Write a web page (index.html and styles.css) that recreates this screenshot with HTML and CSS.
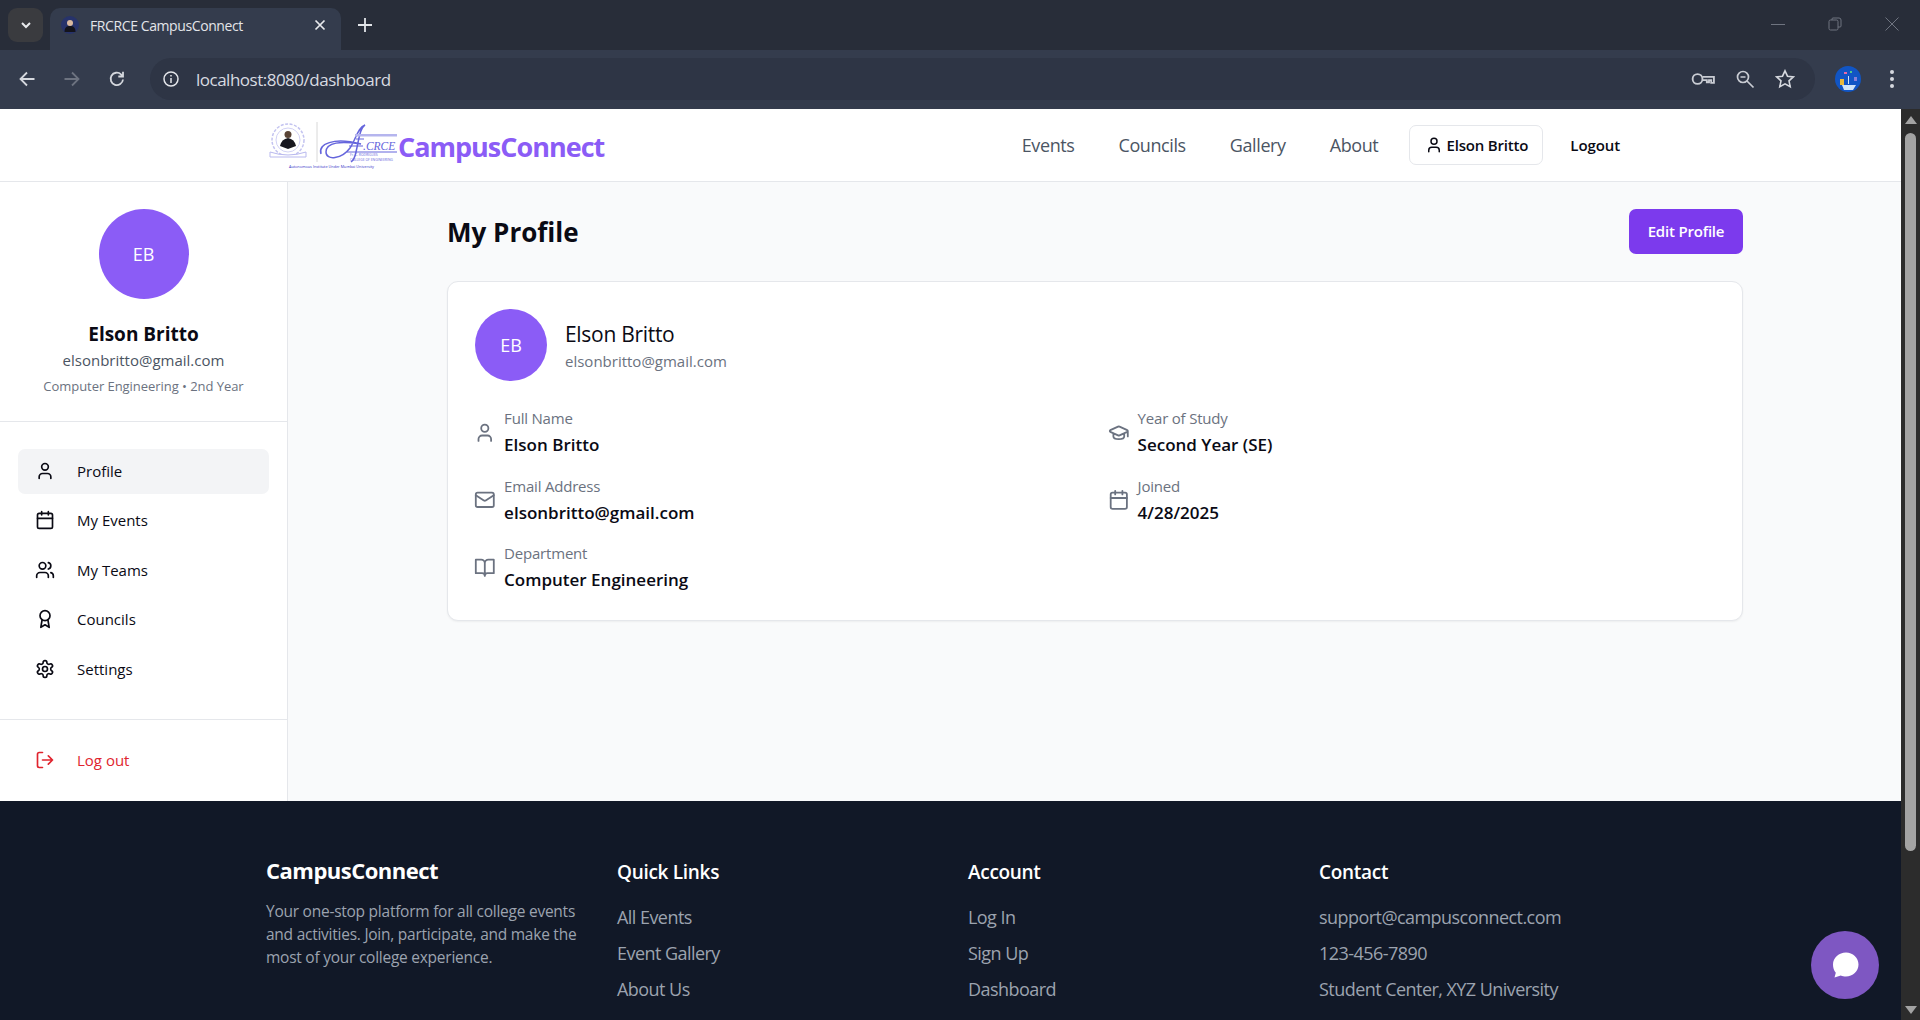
FILE: index.html
```html
<!DOCTYPE html>
<html lang="en">
<head>
    <meta charset="UTF-8">
    <meta name="viewport" content="width=device-width, initial-scale=1.0">
    <title>FRCRCE CampusConnect</title>
    <link rel="stylesheet" href="styles.css">
</head>
<body>
    <div class="tabstrip">
        <div class="tab-search">
            <svg width="16" height="16" viewBox="0 0 16 16" fill="none" stroke="#e8eaed" stroke-width="2"><path d="M4 6l4 4 4-4"/></svg>
        </div>
        <div class="tab">
            <svg class="favicon" width="18" height="18" viewBox="0 0 18 18"><circle cx="9" cy="9" r="9" fill="#27336b"/><circle cx="9" cy="7" r="3" fill="#d9b9a0"/><path d="M3.5 16c0-5 2.500-6 5.500-6s5.500 1 5.500 6z" fill="#14141c"/></svg>
            <span class="tab-title">FRCRCE CampusConnect</span>
            <svg width="12" height="12" viewBox="0 0 12 12" stroke="#e8eaed" stroke-width="1.700"><path d="M1.500 1.500l9 9M10.500 1.500l-9 9"/></svg>
        </div>
        <svg class="new-tab" width="14" height="14" viewBox="0 0 14 14" stroke="#e3e5e9" stroke-width="1.800"><path d="M7 0v14M0 7h14"/></svg>
        <div class="window-controls">
            <svg width="14" height="14" viewBox="0 0 14 14" stroke="#6f7480" fill="none"><path d="M0 7.500h14"/></svg>
            <svg width="14" height="14" viewBox="0 0 14 14" stroke="#6f7480" fill="none"><rect x="1" y="3" width="9" height="10" rx="1.500"/><path d="M4 3V2q0-1 1-1h6q2 0 2 2v6q0 1-1 1h-2"/></svg>
            <svg width="14" height="14" viewBox="0 0 14 14" stroke="#6f7480" fill="none"><path d="M.5.500l13 13M13.500.500l-13 13"/></svg>
        </div>
    </div>
    <div class="toolbar">
        <div class="toolbar-nav">
            <svg width="18" height="18" viewBox="0 0 18 18" fill="none" stroke="#d5d8de" stroke-width="1.800"><path d="M16.500 9h-14M9 2.500L2.500 9 9 15.500"/></svg>
            <svg width="18" height="18" viewBox="0 0 18 18" fill="none" stroke="#6d7380" stroke-width="1.800"><path d="M1.500 9h14M9 2.500L15.500 9 9 15.500"/></svg>
            <svg width="18" height="18" viewBox="0 0 18 18" fill="none" stroke="#d5d8de" stroke-width="1.800"><path d="M15 9.500A6.200 6.200 0 1 1 13 4.300L15 6.300M15 1.800v4.700h-4.700"/></svg>
        </div>
        <div class="omnibox">
            <svg width="18" height="18" viewBox="0 0 18 18" fill="none" stroke="#e3e5e9" stroke-width="1.500"><circle cx="9" cy="9" r="7"/><path d="M9 8v5M9 5v1.500"/></svg>
            <span class="url">localhost:8080/dashboard</span>
            <div class="omnibox-icons">
                <svg width="24" height="18" viewBox="0 0 22 16" fill="none" stroke="#c9ccd3" stroke-width="1.700"><circle cx="6" cy="8" r="4.500"/><path d="M10.500 6h10.500v5.500h-2.500V9h-2v2h-2V9h-4"/></svg>
                <svg width="20" height="20" viewBox="0 0 20 20" fill="none" stroke="#c9ccd3" stroke-width="1.700"><circle cx="8" cy="8" r="5.500"/><path d="M12 12l6.500 6.500M5.500 8h5"/></svg>
                <svg width="20" height="20" viewBox="0 0 20 20" fill="none" stroke="#d5d8de" stroke-width="1.600"><path d="M10 1.800l2.500 5.400 5.800.700-4.300 4 1.200 5.800L10 14.800l-5.200 2.900L6 11.900l-4.300-4 5.800-.700z"/></svg>
            </div>
        </div>
        <svg class="chrome-avatar" width="26" height="30" viewBox="0 0 26 26" preserveAspectRatio="xMidYMid meet"><circle cx="13" cy="13" r="13" fill="#1155c4"/><rect x="5" y="13" width="4" height="6" fill="#e9b93a"/><rect x="9" y="6" width="3" height="2" fill="#e86aa6"/><rect x="15" y="5" width="2" height="2" fill="#52c98a"/><rect x="19" y="11" width="3" height="4" fill="#8a7fd8"/><path d="M13 10h1v8h-1zM7 19h14l-3 5H9z" fill="#cfe4f8"/></svg>
        <svg class="chrome-menu" width="4" height="18" viewBox="0 0 4 18" fill="#d5d8de"><circle cx="2" cy="2" r="2"/><circle cx="2" cy="9" r="2"/><circle cx="2" cy="16" r="2"/></svg>
    </div>

    <div class="viewport">
        <div class="page">
            <header class="site-header">
                <div class="brand">
                    <svg class="brand-logo" width="132" height="52" viewBox="0 0 132 52">
                        <circle cx="22" cy="21" r="16" fill="#fff" stroke="#c3c3f0" stroke-width="1.500" stroke-dasharray="3 1.500"/>
                        <circle cx="22" cy="21" r="12" fill="none" stroke="#d2d2f5"/>
                        <circle cx="22" cy="15.500" r="3.500" fill="#5a4436"/>
                        <path d="M14 27q1.500-7 8-8 6.500 1 8 8l-8 3z" fill="#17171f"/>
                        <path d="M4 33q18 6 36 0v5H4z" fill="#fff" stroke="#b9b9ee"/>
                        <path d="M51 3v40" stroke="#d8d8d8"/>
                        <path d="M55 35c-3-10 12-17 40-10-20-3-35-2-35 8 0 9 16 7 24-4 6-9 8-21 15-23-5 3-6 14-9 27-1 5-2 8-5 10" fill="none" stroke="#6565dc" stroke-width="1.500"/>
                        <path d="M90 20h8M83 27h14" stroke="#6565dc"/>
                        <rect x="89" y="15" width="42" height="2.500" fill="#b5b5ee"/>
                        <text class="logo-name" x="97" y="31">.CRCE</text>
                        <path d="M81 33h50" stroke="#6565dc"/>
                        <text class="logo-small" x="84" y="37">Fr. C. RODRIGUES</text>
                        <text class="logo-small" x="84" y="41.500">COLLEGE OF ENGINEERING</text>
                        <text class="logo-bottom" x="23" y="48.500">Autonomous Institute Under Mumbai University</text>
                    </svg>
                    <span class="brand-text">CampusConnect</span>
                </div>
                <nav class="site-nav">
                    <a class="site-link">Events</a>
                    <a class="site-link">Councils</a>
                    <a class="site-link">Gallery</a>
                    <a class="site-link">About</a>
                    <a class="user-btn">
                        <svg class="lucide" width="18" height="18" viewBox="0 0 24 24"><path d="M19 21v-2a4 4 0 0 0-4-4H9a4 4 0 0 0-4 4v2"/><circle cx="12" cy="7" r="4"/></svg>
                        Elson Britto
                    </a>
                    <a class="logout-btn">Logout</a>
                </nav>
            </header>

            <div class="dashboard">
                <aside class="sidebar">
                    <div class="side-profile">
                        <div class="avatar avatar-lg">EB</div>
                        <div class="side-name">Elson Britto</div>
                        <div class="side-email">elsonbritto@gmail.com</div>
                        <div class="side-dept">Computer Engineering • 2nd Year</div>
                    </div>
                    <nav class="side-nav">
                        <a class="side-link active">
                            <svg class="lucide" width="20" height="20" viewBox="0 0 24 24"><path d="M19 21v-2a4 4 0 0 0-4-4H9a4 4 0 0 0-4 4v2"/><circle cx="12" cy="7" r="4"/></svg>
                            Profile
                        </a>
                        <a class="side-link">
                            <svg class="lucide" width="20" height="20" viewBox="0 0 24 24"><path d="M8 2v4M16 2v4"/><rect x="3" y="4" width="18" height="18" rx="2"/><path d="M3 10h18"/></svg>
                            My Events
                        </a>
                        <a class="side-link">
                            <svg class="lucide" width="20" height="20" viewBox="0 0 24 24"><path d="M16 21v-2a4 4 0 0 0-4-4H6a4 4 0 0 0-4 4v2"/><circle cx="9" cy="7" r="4"/><path d="M22 21v-2a4 4 0 0 0-3-3.870M16 3.130a4 4 0 0 1 0 7.750"/></svg>
                            My Teams
                        </a>
                        <a class="side-link">
                            <svg class="lucide" width="20" height="20" viewBox="0 0 24 24"><circle cx="12" cy="8" r="6"/><path d="M15.477 12.890 17 22l-5-3-5 3 1.523-9.110"/></svg>
                            Councils
                        </a>
                        <a class="side-link">
                            <svg class="lucide" width="20" height="20" viewBox="0 0 24 24"><path d="M12.220 2h-.44a2 2 0 0 0-2 2v.18a2 2 0 0 1-1 1.730l-.43.250a2 2 0 0 1-2 0l-.15-.080a2 2 0 0 0-2.730.730l-.22.380a2 2 0 0 0 .730 2.730l.15.100a2 2 0 0 1 1 1.720v.510a2 2 0 0 1-1 1.740l-.15.090a2 2 0 0 0-.730 2.730l.22.380a2 2 0 0 0 2.730.730l.15-.080a2 2 0 0 1 2 0l.43.250a2 2 0 0 1 1 1.730V20a2 2 0 0 0 2 2h.44a2 2 0 0 0 2-2v-.18a2 2 0 0 1 1-1.730l.43-.250a2 2 0 0 1 2 0l.15.080a2 2 0 0 0 2.730-.730l.22-.390a2 2 0 0 0-.730-2.730l-.15-.080a2 2 0 0 1-1-1.740v-.500a2 2 0 0 1 1-1.740l.15-.090a2 2 0 0 0 .730-2.730l-.22-.380a2 2 0 0 0-2.730-.730l-.15.080a2 2 0 0 1-2 0l-.43-.250a2 2 0 0 1-1-1.730V4a2 2 0 0 0-2-2z"/><circle cx="12" cy="12" r="3"/></svg>
                            Settings
                        </a>
                    </nav>
                    <div class="side-footer">
                        <a class="side-link danger">
                            <svg class="lucide" width="20" height="20" viewBox="0 0 24 24"><path d="M9 21H5a2 2 0 0 1-2-2V5a2 2 0 0 1 2-2h4M16 17l5-5-5-5M21 12H9"/></svg>
                            Log out
                        </a>
                    </div>
                </aside>

                <main class="main">
                    <div class="main-inner">
                        <div class="main-head">
                            <h1 class="main-title">My Profile</h1>
                            <button class="edit-btn">Edit Profile</button>
                        </div>
                        <section class="card">
                            <div class="card-head">
                                <div class="avatar avatar-md">EB</div>
                                <div>
                                    <div class="card-name">Elson Britto</div>
                                    <div class="card-email">elsonbritto@gmail.com</div>
                                </div>
                            </div>
                            <div class="info-grid">
                                <div class="info-col">
                                    <div class="info-item">
                                        <svg class="lucide info-icon" width="21.6" height="21.6" viewBox="0 0 24 24"><path d="M19 21v-2a4 4 0 0 0-4-4H9a4 4 0 0 0-4 4v2"/><circle cx="12" cy="7" r="4"/></svg>
                                        <div><div class="info-label">Full Name</div><div class="info-value">Elson Britto</div></div>
                                    </div>
                                    <div class="info-item">
                                        <svg class="lucide info-icon" width="21.6" height="21.6" viewBox="0 0 24 24"><rect x="2" y="4" width="20" height="16" rx="2"/><path d="m22 7-8.970 5.700a1.940 1.940 0 0 1-2.060 0L2 7"/></svg>
                                        <div><div class="info-label">Email Address</div><div class="info-value">elsonbritto@gmail.com</div></div>
                                    </div>
                                    <div class="info-item">
                                        <svg class="lucide info-icon" width="21.6" height="21.6" viewBox="0 0 24 24"><path d="M2 3h6a4 4 0 0 1 4 4v14a3 3 0 0 0-3-3H2zM22 3h-6a4 4 0 0 0-4 4v14a3 3 0 0 1 3-3h7z"/></svg>
                                        <div><div class="info-label">Department</div><div class="info-value">Computer Engineering</div></div>
                                    </div>
                                </div>
                                <div class="info-col">
                                    <div class="info-item">
                                        <svg class="lucide info-icon" width="21.6" height="21.6" viewBox="0 0 24 24"><path d="M21.420 10.920a1 1 0 0 0-.020-1.840L12.830 5.180a2 2 0 0 0-1.660 0L2.600 9.080a1 1 0 0 0 0 1.830l8.570 3.910a2 2 0 0 0 1.660 0zM22 10v6M6 12.500V16a6 3 0 0 0 12 0v-3.500"/></svg>
                                        <div><div class="info-label">Year of Study</div><div class="info-value">Second Year (SE)</div></div>
                                    </div>
                                    <div class="info-item">
                                        <svg class="lucide info-icon" width="21.6" height="21.6" viewBox="0 0 24 24"><path d="M8 2v4M16 2v4"/><rect x="3" y="4" width="18" height="18" rx="2"/><path d="M3 10h18"/></svg>
                                        <div><div class="info-label">Joined</div><div class="info-value">4/28/2025</div></div>
                                    </div>
                                </div>
                            </div>
                        </section>
                    </div>
                </main>
            </div>

            <footer class="site-footer">
                <div class="footer-grid">
                    <div>
                        <div class="footer-brand">CampusConnect</div>
                        <p class="footer-desc">Your one-stop platform for all college events and activities. Join, participate, and make the most of your college experience.</p>
                    </div>
                    <div>
                        <div class="footer-title">Quick Links</div>
                        <a class="footer-link">All Events</a>
                        <a class="footer-link">Event Gallery</a>
                        <a class="footer-link">About Us</a>
                    </div>
                    <div>
                        <div class="footer-title">Account</div>
                        <a class="footer-link">Log In</a>
                        <a class="footer-link">Sign Up</a>
                        <a class="footer-link">Dashboard</a>
                    </div>
                    <div>
                        <div class="footer-title">Contact</div>
                        <a class="footer-link">support@campusconnect.com</a>
                        <a class="footer-link">123-456-7890</a>
                        <a class="footer-link">Student Center, XYZ University</a>
                    </div>
                </div>
            </footer>

            <button class="chat-btn">
                <svg width="32" height="32" viewBox="0 0 32 32" fill="#fff"><path d="M17 3.500c6.800 0 12.500 5.300 12.500 12s-5.700 12-12.500 12c-2 0-3.600-.400-5.200-1.100L5.500 28.500l1.300-4.800C4.900 21.500 4 18.700 4 15.500c0-6.700 6-12 13-12z"/></svg>
            </button>
        </div>
        <div class="scrollbar">
            <span class="arrow-up"></span>
            <span class="thumb"></span>
            <span class="arrow-down"></span>
        </div>
    </div>
</body>
</html>
```

FILE: styles.css
```css
* {
    box-sizing: border-box;
}
html, body {
    height: 100%;
}
body {
    margin: 0;
    height: 1020px;
    display: flex;
    flex-direction: column;
    overflow: hidden;
    font-family: "Open Sans", "Noto Sans", sans-serif;
    color: #0a0a14;
    background-color: #fff;
}
a {
    display: block;
}

/* browser window */
.tabstrip {
    height: 50px;
    flex-shrink: 0;
    display: flex;
    align-items: flex-end;
    padding-left: 8px;
    background-color: #282d39;
}
.tab-search {
    width: 35px;
    height: 34px;
    margin-bottom: 8px;
    margin-right: 7px;
    display: flex;
    align-items: center;
    justify-content: center;
    border-radius: 9px;
    background-color: #3a3b3f;
}
.tab {
    width: 291px;
    height: 42px;
    display: flex;
    align-items: center;
    padding: 0 15px 8px 11px;
    border-radius: 10px 10px 0 0;
    background-color: #343c4d;
}
.favicon {
    margin-right: 11px;
}
.tab-title {
    flex: 1;
    font-family: "Open Sans", sans-serif;
    font-size: 14px;
    letter-spacing: -0.4px;
    color: #e3e5e9;
}
.new-tab {
    margin: 0 0 18px 17px;
}
.window-controls {
    margin-left: auto;
    margin-bottom: 19px;
    padding-right: 21px;
    display: flex;
    gap: 43px;
}
.toolbar {
    height: 59px;
    flex-shrink: 0;
    display: flex;
    align-items: center;
    padding: 0 26px 1px 18px;
    background-color: #343c4d;
}
.toolbar-nav {
    width: 132px;
    display: flex;
    gap: 27px;
}
.omnibox {
    width: 1665px;
    height: 42px;
    display: flex;
    align-items: center;
    padding: 0 20px 0 12px;
    border-radius: 21px;
    background-color: #2e3545;
}
.url {
    margin-left: 16px;
    font-size: 17px;
    letter-spacing: -0.5px;
    color: #d8dbe1;
}
.omnibox-icons {
    margin-left: auto;
    display: flex;
    align-items: center;
    gap: 20px;
}
.chrome-avatar {
    margin-left: 20px;
}
.chrome-menu {
    margin-left: 29px;
}

/* page */
.viewport {
    flex: 1;
    min-height: 0;
    display: flex;
}
.page {
    position: relative;
    flex: 1;
    min-width: 0;
    display: flex;
    flex-direction: column;
    overflow: hidden;
}
.scrollbar {
    width: 19px;
    flex-shrink: 0;
    display: flex;
    flex-direction: column;
    align-items: center;
    padding-top: 7px;
    background-color: #2c2c2c;
}
.arrow-up {
    border: 6px solid transparent;
    border-top: 0;
    border-bottom: 8px solid #a3a3a3;
}
.thumb {
    width: 11px;
    height: 718px;
    margin-top: 9px;
    border-radius: 6px;
    background-color: #a3a3a3;
}
.arrow-down {
    margin-top: auto;
    margin-bottom: 6px;
    border: 6px solid transparent;
    border-bottom: 0;
    border-top: 8px solid #a3a3a3;
}

.site-header {
    height: 73px;
    flex-shrink: 0;
    display: flex;
    align-items: center;
    justify-content: space-between;
    padding: 0 267px 0 266px;
    border-bottom: 1px solid #e5e7eb;
    background-color: #fff;
}
.brand {
    display: flex;
    align-items: center;
}
.brand-logo {
    display: block;
}
.logo-small {
    font-size: 3.400px;
    fill: #6565dc;
}
.logo-name {
    font-family: "Liberation Serif", serif;
    font-style: italic;
    font-size: 11.500px;
    fill: #6565dc;
}
.logo-bottom {
    font-size: 3.800px;
    fill: #3434c8;
}
.brand-text {
    padding-top: 2px;
    font-size: 27px;
    font-weight: 700;
    letter-spacing: -1px;
    color: #8b5cf6;
}
.site-nav {
    display: flex;
    align-items: center;
}
.site-link {
    margin-right: 44px;
    font-size: 18px;
    letter-spacing: -0.4px;
    color: #4b5563;
}
.site-link:nth-child(4) {
    margin-right: 31px;
}
.user-btn {
    height: 40px;
    width: 134px;
    display: flex;
    align-items: center;
    justify-content: center;
    gap: 4px;
    font-size: 15px;
    font-weight: 600;
    letter-spacing: -0.2px;
    color: #0a0a14;
    border: 1px solid #e5e7eb;
    border-radius: 7px;
    background-color: #fff;
}
.logout-btn {
    padding: 0 14px;
    margin-left: 13px;
    font-size: 15px;
    font-weight: 600;
    letter-spacing: -0.1px;
}
.lucide {
    flex-shrink: 0;
    fill: none;
    stroke: currentColor;
    stroke-width: 2;
    stroke-linecap: round;
    stroke-linejoin: round;
}

.dashboard {
    flex-shrink: 0;
    height: 619px;
    display: flex;
}
.sidebar {
    width: 288px;
    flex-shrink: 0;
    display: flex;
    flex-direction: column;
    border-right: 1px solid #e5e7eb;
    background-color: #fff;
}
.side-profile {
    height: 240px;
    flex-shrink: 0;
    display: flex;
    flex-direction: column;
    align-items: center;
    padding-top: 27px;
    border-bottom: 1px solid #e5e7eb;
}
.avatar {
    display: flex;
    align-items: center;
    justify-content: center;
    flex-shrink: 0;
    border-radius: 50%;
    color: #fff;
    background-color: #8b5cf6;
}
.avatar-lg {
    width: 90px;
    height: 90px;
    font-size: 18px;
}
.avatar-md {
    width: 72px;
    height: 72px;
    font-size: 18px;
}
.side-name {
    margin-top: 22px;
    font-size: 19px;
    font-weight: 700;
    line-height: 26px;
}
.side-email {
    margin-top: 2px;
    font-size: 15px;
    line-height: 22px;
    color: #4b5563;
}
.side-dept {
    margin-top: 5px;
    font-size: 13px;
    line-height: 20px;
    letter-spacing: -0.05px;
    color: #6b7280;
}
.side-nav {
    flex: 1;
    padding: 27px 18px 0;
}
.side-link {
    height: 45px;
    margin-bottom: 4.500px;
    display: flex;
    align-items: center;
    gap: 22px;
    padding: 0 0 2px 17px;
    border-radius: 7px;
    font-size: 15px;
    font-weight: 500;
    color: #0a0a14;
}
.side-link.active {
    background-color: #f3f4f6;
}
.side-footer {
    height: 82px;
    flex-shrink: 0;
    padding: 18px 18px 0;
    border-top: 1px solid #e5e7eb;
}
.side-link.danger {
    color: #e0242e;
}

.main {
    flex: 1;
    min-width: 0;
    padding: 27px 158px 0 159px;
    background-color: #f9fafb;
}
.main-head {
    height: 45px;
    display: flex;
    align-items: center;
    justify-content: space-between;
    margin-bottom: 27px;
}
.main-title {
    margin: 0;
    font-size: 26px;
    font-weight: 700;
}
.edit-btn {
    width: 114px;
    height: 45px;
    padding-bottom: 2px;
    border: 0;
    border-radius: 7px;
    font-family: inherit;
    font-size: 15px;
    font-weight: 600;
    letter-spacing: -0.2px;
    color: #fff;
    background-color: #7c3aed;
}
.card {
    height: 340px;
    padding: 27px;
    border: 1px solid #e5e7eb;
    border-radius: 11px;
    background-color: #fff;
    box-shadow: 0 1px 2px rgba(0, 0, 0, 0.05);
}
.card-head {
    display: flex;
    align-items: center;
    gap: 18px;
    margin-bottom: 27px;
}
.card-name {
    padding-top: 2px;
    font-size: 21px;
    line-height: 28px;
    letter-spacing: -0.3px;
}
.card-email {
    margin-top: 3px;
    font-size: 15px;
    line-height: 21px;
    color: #6b7280;
}
.info-grid {
    display: grid;
    grid-template-columns: 1fr 1fr;
    column-gap: 27px;
}
.info-col {
    display: flex;
    flex-direction: column;
    gap: 18.700px;
}
.info-item {
    display: flex;
    align-items: center;
    gap: 8.500px;
}
.info-icon {
    color: #6b7280;
    margin-left: -1px;
}
.info-label {
    font-size: 15px;
    line-height: 20px;
    letter-spacing: -0.2px;
    color: #6b7280;
}
.info-value {
    margin-top: 5px;
    font-size: 17px;
    font-weight: 600;
    line-height: 24px;
}

.site-footer {
    flex: 1;
    min-height: 0;
    padding: 56px 267px 0 266px;
    background-color: #111827;
}
.footer-grid {
    display: grid;
    grid-template-columns: repeat(4, 1fr);
    column-gap: 36px;
}
.footer-brand {
    font-size: 22px;
    font-weight: 700;
    line-height: 27px;
    letter-spacing: -0.5px;
    color: #fff;
}
.footer-desc {
    margin: 16px 0 0;
    font-size: 15.500px;
    line-height: 23px;
    letter-spacing: -0.25px;
    color: #9ca3af;
}
.footer-title {
    margin-top: 2px;
    margin-bottom: 19px;
    font-size: 19px;
    font-weight: 600;
    line-height: 27px;
    letter-spacing: -0.3px;
    color: #fff;
}
.footer-link {
    margin-bottom: 12px;
    font-size: 18px;
    line-height: 24px;
    letter-spacing: -0.55px;
    color: #9ca3af;
}
.chat-btn {
    position: absolute;
    right: 22px;
    bottom: 21px;
    width: 68px;
    height: 68px;
    display: flex;
    align-items: center;
    justify-content: center;
    border: 0;
    border-radius: 50%;
    background-color: #7e57c2;
}
```
